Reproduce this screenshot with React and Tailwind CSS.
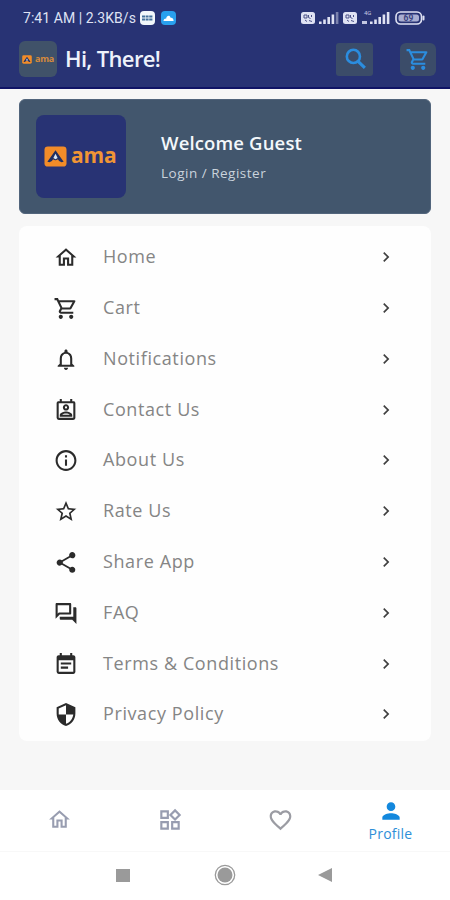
import React from 'react';
import {
  MdOutlineHome,
  MdOutlineShoppingCart,
  MdNotificationsNone,
  MdOutlinePermContactCalendar,
  MdInfoOutline,
  MdStarBorder,
  MdShare,
  MdOutlineQuestionAnswer,
  MdEventNote,
  MdSecurity,
  MdChevronRight,
  MdOutlineWidgets,
  MdFavoriteBorder,
  MdPerson,
} from 'react-icons/md';

const menuItems = [
  { label: 'Home', icon: MdOutlineHome },
  { label: 'Cart', icon: MdOutlineShoppingCart },
  { label: 'Notifications', icon: MdNotificationsNone },
  { label: 'Contact Us', icon: MdOutlinePermContactCalendar },
  { label: 'About Us', icon: MdInfoOutline },
  { label: 'Rate Us', icon: MdStarBorder },
  { label: 'Share App', icon: MdShare },
  { label: 'FAQ', icon: MdOutlineQuestionAnswer },
  { label: 'Terms & Conditions', icon: MdEventNote },
  { label: 'Privacy Policy', icon: MdSecurity },
];

const LogoMark = ({ className }) => (
  <svg viewBox="0 0 24 22" className={className} preserveAspectRatio="none">
    <rect x="0.5" y="0.5" width="23" height="21" rx="3.5" fill="#f28c28" />
    <path d="M12 4.5 L3.5 16.5 Q8 18 9.5 14 Q12 16 14.5 14 Q16 18 20.5 16.5 Z" fill="#1f2f63" />
    <path d="M12 8 L9.8 12.6 L12 14 L14.2 12.6 Z" fill="#dceaf5" />
  </svg>
);

const SimBadge = () => (
  <svg viewBox="0 0 14 12" className="w-[14px] h-[12px]">
    <rect width="14" height="12" rx="2.5" fill="#dfe2f3" />
    <path d="M3 3h3v3H3zM7.5 3v2.5l2 1M4 8l2 1.5M8 8.5l3 1M10.5 3v2" fill="none" stroke="#4a5187" strokeWidth="1" />
  </svg>
);

const Signal = ({ dim }) => (
  <svg viewBox="0 0 20 12" className="w-5 h-3" fill="#dfe2f3">
    <rect x="0" y="9.5" width="2.6" height="2.5" />
    <rect x="4.2" y="7.5" width="2.6" height="4.5" />
    <rect x="8.4" y="5" width="2.6" height="7" />
    <rect x="12.6" y="2.5" width="2.6" height="9.5" />
    <rect x="16.8" y="0" width="2.6" height="12" opacity={dim ? 0.45 : 1} />
  </svg>
);

const Battery = () => (
  <svg viewBox="0 0 30 14" className="w-[30px] h-[14px]">
    <rect x="1" y="1" width="25.5" height="12" rx="4.5" fill="none" stroke="#dfe2f3" strokeWidth="1.6" />
    <rect x="3.5" y="3.5" width="20.5" height="7" rx="2.5" fill="#a9aed2" />
    <rect x="27.5" y="4.5" width="2" height="5" rx="1" fill="#dfe2f3" />
    <text x="13.5" y="10.2" fontSize="8.5" fontWeight="700" textAnchor="middle" fill="#3c4480">69</text>
  </svg>
);

const StatusBar = () => (
  <div className="flex items-center justify-between h-9 pl-[23px] pr-[25px] font-[Roboto,sans-serif]">
    <div className="flex items-center">
      <span className="w-[113px] text-[14px] tracking-[0.05px] text-[#dfe2f3] whitespace-nowrap">7:41 AM | 2.3KB/s</span>
      <svg viewBox="0 0 15 14" className="ml-1 w-[15px] h-[14px]">
        <rect width="15" height="14" rx="4" fill="#f1f7fb" />
        <path d="M2 5.5h11M2 8.5h11" stroke="#43709c" strokeWidth="2" strokeDasharray="3 .6" />
      </svg>
      <svg viewBox="0 0 15 14" className="ml-[6px] w-[15px] h-[14px]">
        <rect width="15" height="14" rx="4" fill="#29a0ee" />
        <path d="M2.5 10c0-2 1.5-2.7 2.7-2.6C5.6 4.2 9 3.8 9.6 6.8c2-.3 3 1.2 3 3.2z" fill="#fff" />
      </svg>
    </div>
    <div className="flex items-center">
      <SimBadge />
      <span className="ml-1"><Signal dim /></span>
      <span className="ml-1"><SimBadge /></span>
      <span className="relative ml-[5px] w-[28px] flex justify-end">
        <Signal />
        <span className="absolute left-[2px] top-[-2px] text-[6px] leading-none text-[#c3c7e2]">4G</span>
        <span className="absolute left-0 bottom-0 w-[5px] h-[3px] bg-[#c3c7e2]" />
      </span>
      <span className="ml-[5px]"><Battery /></span>
    </div>
  </div>
);

const Header = () => (
  <header className="h-[89px] bg-[#283374] border-b-2 border-[#101466]">
    <StatusBar />
    <div className="flex items-center pl-[19px] pr-[14px] pt-[5px]">
      <div className="w-[38px] h-9 rounded-md bg-[#405269] flex items-center justify-center gap-[3px]">
        <LogoMark className="w-[10px] h-[9px]" />
        <span className="text-[9px] leading-none pb-[1px] font-bold tracking-[-0.3px] text-[#d68a3c]">ama</span>
      </div>
      <h1 className="ml-2 pb-[2px] text-[22px] leading-8 font-semibold tracking-[-0.65px] text-[#eef2fb] whitespace-nowrap">Hi, There!</h1>
      <div className="ml-auto flex items-center gap-[27px]">
        <button className="w-[37px] h-[33px] rounded-[3px] bg-[#3b4c69] flex items-center justify-center">
          <svg viewBox="0 0 24 24" className="mt-px ml-[2px] w-[26px] h-[25px]" fill="none" stroke="#2b8ddf">
            <circle cx="9.5" cy="9" r="6.3" strokeWidth="2.5" />
            <path d="M14 13.8l6.5 6.2" strokeWidth="3" />
          </svg>
        </button>
        <button className="w-9 h-[33px] rounded-md bg-[#3b4c69] flex items-center justify-center">
          <MdOutlineShoppingCart className="w-[26px] h-[25px] text-[#2b8ddf]" />
        </button>
      </div>
    </div>
  </header>
);

const WelcomeCard = () => (
  <section className="mt-[10px] mx-[19px] h-[115px] rounded-md bg-[#42566d] flex items-start pl-4 pt-[15px] border border-[#52657c]">
    <div className="w-[90px] h-[83px] rounded-lg bg-[#283374] flex items-center pl-2 gap-1">
      <LogoMark className="w-[23px] h-[21px]" />
      <span className="text-[21px] leading-none pb-[2px] font-bold tracking-[-0.1px] text-[#f09535]">ama</span>
    </div>
    <div className="ml-[35px] pt-[14px]">
      <h2 className="text-[18.5px] leading-7 font-semibold tracking-[0.15px] text-[#f4f8fb] whitespace-nowrap">Welcome Guest</h2>
      <p className="mt-[6px] text-[13.5px] leading-5 tracking-[0.5px] text-[#cad3dc]">Login / Register</p>
    </div>
  </section>
);

const MenuRow = ({ item }) => {
  const Icon = item.icon;
  return (
    <li className="h-[50.8px] flex items-center pl-[34px] pr-[34px]">
      <Icon className="mt-[2px] w-[26px] h-[25px] text-[#2b2b2b]" />
      <span className="ml-6 text-[18px] tracking-[0.6px] text-[#858585] whitespace-nowrap">{item.label}</span>
      <MdChevronRight className="mt-px ml-auto w-[22px] h-[20px] text-[#404040]" />
    </li>
  );
};

const BottomNav = () => (
  <nav className="h-[61px] grid grid-cols-[118px_103px_118px_103px] bg-white">
    <div className="flex items-center justify-center pb-[2px]">
      <MdOutlineHome className="w-[25px] h-[25px] text-[#989db0]" />
    </div>
    <div className="flex items-center justify-center pb-[2px]">
      <MdOutlineWidgets className="w-[26px] h-[26px] text-[#989db0]" />
    </div>
    <div className="flex items-center justify-center pb-[2px]">
      <MdFavoriteBorder className="w-[27px] h-[26px] text-[#9b9ca3]" />
    </div>
    <div className="flex flex-col items-center pt-2">
      <MdPerson className="w-[28px] h-[26px] text-[#1388dd]" />
      <span className="text-[14px] leading-5 tracking-[0.25px] text-[#2d8fd8]">Profile</span>
    </div>
  </nav>
);

const SystemNav = () => (
  <div className="h-[49px] pb-[2px] border-t border-[#f8f8f8] bg-white flex items-center pl-[116px]">
    <span className="w-[14px] h-[13px] bg-[#9a9a9a]" />
    <svg viewBox="0 0 22 22" className="ml-[84px] w-[22px] h-[22px]">
      <circle cx="11" cy="11" r="9.7" fill="none" stroke="#9a9a9a" strokeWidth="1.3" />
      <circle cx="11" cy="11" r="7.5" fill="#9a9a9a" />
    </svg>
    <svg viewBox="0 0 14 14" className="ml-[82px] w-[14px] h-[14px]">
      <path d="M0 7 14 0v14z" fill="#9a9a9a" />
    </svg>
  </div>
);

const App = () => {
  return (
    <div className="w-[450px] h-[900px] flex flex-col overflow-hidden bg-[#f7f7f7] font-['Open_Sans',sans-serif]">
      <Header />
      <WelcomeCard />
      <ul className="mt-3 mx-[19px] h-[515px] pt-[5.4px] rounded-lg bg-[#fefefe]">
        {menuItems.map((item) => (
          <MenuRow key={item.label} item={item} />
        ))}
      </ul>
      <div className="mt-auto">
        <BottomNav />
        <SystemNav />
      </div>
    </div>
  );
};

export default App;
